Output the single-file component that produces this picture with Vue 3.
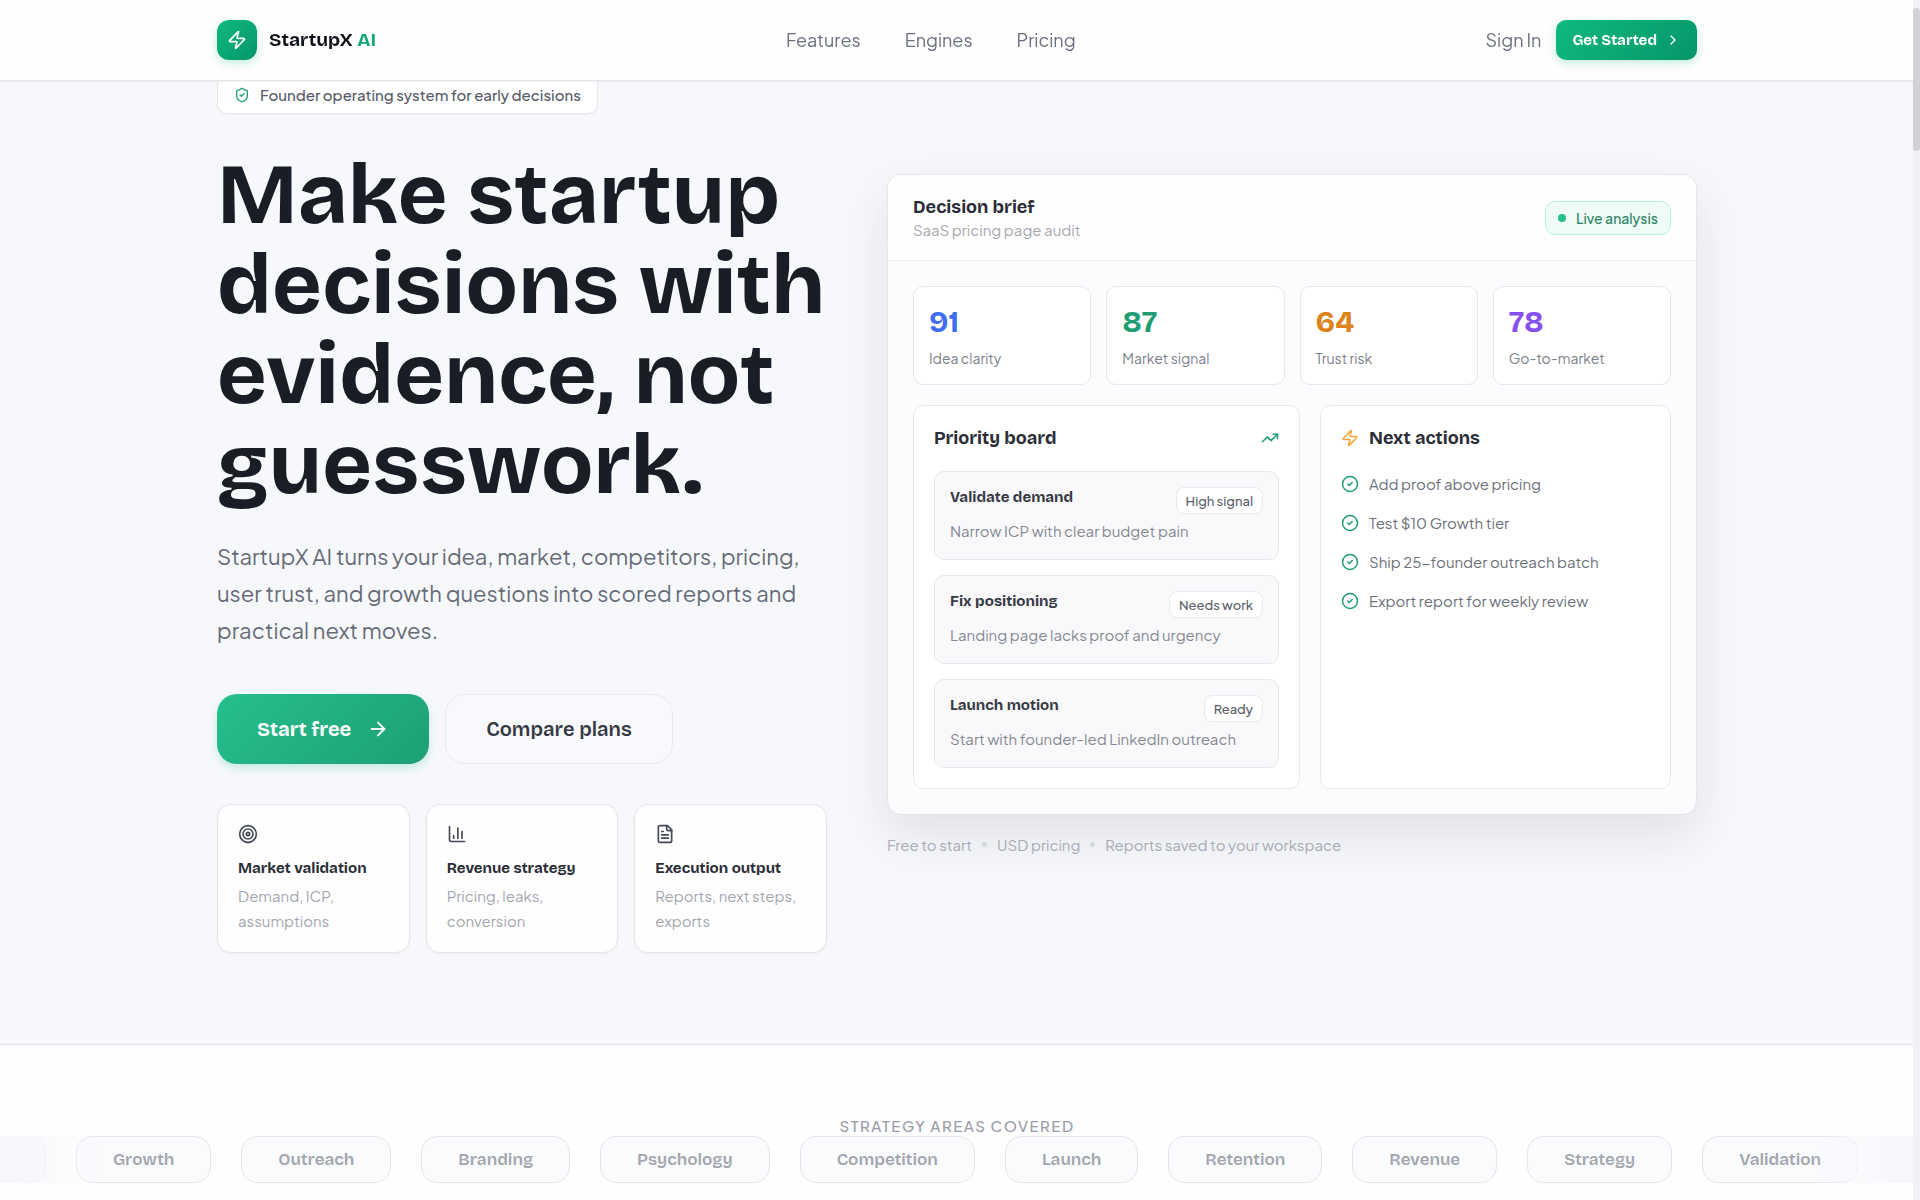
<template>
  <div class="page">
    <header class="topbar">
      <div class="container topbar-inner">
        <a class="brand" href="#">
          <span class="brand-mark">
            <svg class="icon" width="20" height="20" viewBox="0 0 24 24"><path :d="ICONS.zap" /></svg>
          </span>
          <span>StartupX <em>AI</em></span>
        </a>
        <nav class="nav">
          <a v-for="item in navItems" :key="item" href="#">{{ item }}</a>
        </nav>
        <div class="account">
          <a href="#">Sign In</a>
          <button class="btn-small" type="button">
            Get Started
            <svg class="icon" width="16" height="16" viewBox="0 0 24 24"><path d="m9 18 6-6-6-6" /></svg>
          </button>
        </div>
      </div>
    </header>

    <main>
      <section class="hero">
        <div class="container hero-grid">
          <div class="intro">
            <div class="pill">
              <svg class="icon green" width="16" height="16" viewBox="0 0 24 24"><path :d="ICONS.shield" /><path d="m9 12 2 2 4-4" /></svg>
              Founder operating system for early decisions
            </div>
            <h1>Make startup decisions with evidence, not guesswork.</h1>
            <p class="lead">
              StartupX AI turns your idea, market, competitors, pricing, user trust, and growth questions into scored reports and practical next moves.
            </p>
            <div class="actions">
              <button class="btn primary" type="button">
                Start free
                <svg class="icon" width="22" height="22" viewBox="0 0 24 24"><path d="M5 12h14" /><path d="m12 5 7 7-7 7" /></svg>
              </button>
              <button class="btn ghost" type="button">Compare plans</button>
            </div>
            <div class="features">
              <article v-for="f in features" :key="f.title" class="feature">
                <svg class="icon" width="20" height="20" viewBox="0 0 24 24"><path v-for="d in f.paths" :key="d" :d="d" /></svg>
                <h3>{{ f.title }}</h3>
                <p>{{ f.text }}</p>
              </article>
            </div>
          </div>

          <div class="preview">
            <div class="brief">
              <div class="brief-head">
                <div>
                  <h2>Decision brief</h2>
                  <p>SaaS pricing page audit</p>
                </div>
                <span class="live"><i></i>Live analysis</span>
              </div>
              <div class="brief-body">
                <div class="stats">
                  <div v-for="s in stats" :key="s.label" class="stat">
                    <strong :class="s.color">{{ s.value }}</strong>
                    <span>{{ s.label }}</span>
                  </div>
                </div>
                <div class="boards">
                  <div class="board">
                    <div class="board-head spread">
                      <h2>Priority board</h2>
                      <svg class="icon green" width="18" height="18" viewBox="0 0 24 24"><path d="m22 7-8.500 8.500-5-5L2 17" /><path d="M16 7h6v6" /></svg>
                    </div>
                    <div class="tasks">
                      <div v-for="t in tasks" :key="t.title" class="task">
                        <div>
                          <h3>{{ t.title }}</h3>
                          <p>{{ t.text }}</p>
                        </div>
                        <span class="tag">{{ t.tag }}</span>
                      </div>
                    </div>
                  </div>
                  <div class="board">
                    <div class="board-head">
                      <svg class="icon amber" width="18" height="18" viewBox="0 0 24 24"><path :d="ICONS.zap" /></svg>
                      <h2>Next actions</h2>
                    </div>
                    <ul class="checks">
                      <li v-for="a in nextActions" :key="a">
                        <svg class="icon green" width="18" height="18" viewBox="0 0 24 24"><circle cx="12" cy="12" r="10" /><path d="m9 12 2 2 4-4" /></svg>
                        {{ a }}
                      </li>
                    </ul>
                  </div>
                </div>
              </div>
            </div>
            <div class="notes">
              <span v-for="n in notes" :key="n">{{ n }}</span>
            </div>
          </div>
        </div>
      </section>

      <section class="areas">
        <p class="areas-label">Strategy areas covered</p>
        <div class="marquee">
          <span v-for="(a, i) in areas" :key="i" class="chip">{{ a }}</span>
        </div>
      </section>
    </main>
    <div class="scrollbar"><div class="thumb"></div></div>
  </div>
</template>

<script setup>
const ICONS = {
  zap: 'M4 14a1 1 0 0 1-.78-1.63l9.900-10.200a.5.5 0 0 1 .86.460l-1.920 6.020A1 1 0 0 0 13 10h7a1 1 0 0 1 .78 1.630l-9.900 10.200a.5.5 0 0 1-.86-.46l1.920-6.020A1 1 0 0 0 11 14z',
  shield: 'M20 13c0 5-3.500 7.500-7.660 8.950a1 1 0 0 1-.67-.01C7.500 20.500 4 18 4 13V6a1 1 0 0 1 1-1c2 0 4.500-1.200 6.240-2.720a1.170 1.170 0 0 1 1.520 0C14.510 3.810 17 5 19 5a1 1 0 0 1 1 1z',
}

const navItems = ['Features', 'Engines', 'Pricing']

const features = [
  {
    title: 'Market validation',
    text: 'Demand, ICP, assumptions',
    paths: [
      'M2 12a10 10 0 1 0 20 0a10 10 0 1 0-20 0',
      'M6 12a6 6 0 1 0 12 0a6 6 0 1 0-12 0',
      'M10 12a2 2 0 1 0 4 0a2 2 0 1 0-4 0',
    ],
  },
  {
    title: 'Revenue strategy',
    text: 'Pricing, leaks, conversion',
    paths: ['M3 3v16a2 2 0 0 0 2 2h16', 'M18 17V9', 'M13 17V5', 'M8 17v-3'],
  },
  {
    title: 'Execution output',
    text: 'Reports, next steps, exports',
    paths: [
      'M15 2H6a2 2 0 0 0-2 2v16a2 2 0 0 0 2 2h12a2 2 0 0 0 2-2V7z',
      'M14 2v4a2 2 0 0 0 2 2h4',
      'M10 9H8',
      'M16 13H8',
      'M16 17H8',
    ],
  },
]

const stats = [
  { value: 91, label: 'Idea clarity', color: 'blue' },
  { value: 87, label: 'Market signal', color: 'green' },
  { value: 64, label: 'Trust risk', color: 'orange' },
  { value: 78, label: 'Go-to-market', color: 'violet' },
]

const tasks = [
  { title: 'Validate demand', text: 'Narrow ICP with clear budget pain', tag: 'High signal' },
  { title: 'Fix positioning', text: 'Landing page lacks proof and urgency', tag: 'Needs work' },
  { title: 'Launch motion', text: 'Start with founder-led LinkedIn outreach', tag: 'Ready' },
]

const nextActions = [
  'Add proof above pricing',
  'Test $10 Growth tier',
  'Ship 25-founder outreach batch',
  'Export report for weekly review',
]

const notes = ['Free to start', 'USD pricing', 'Reports saved to your workspace']

// the first and last ones run off the edges of the strip
const areas = [
  'Pricing', 'Growth', 'Outreach', 'Branding', 'Psychology', 'Competition',
  'Launch', 'Retention', 'Revenue', 'Strategy', 'Validation', 'Pricing',
]
</script>

<style>
body {
  background: #f7f8fc;
  overflow: hidden;
}
</style>

<style scoped>
.page {
  display: flex;
  flex-direction: column;
  min-height: 100vh;
  padding-right: 6px;
  box-sizing: border-box;
  color: #1a1d26;
  font-family: "Plus Jakarta Sans", Inter, "Liberation Sans", sans-serif;
  font-size: 15px;
  line-height: 24px;
}

.page * {
  box-sizing: border-box;
}

h1, h2, h3, p, ul {
  margin: 0;
  padding: 0;
}

h1, h2, h3, .brand, .btn, .btn-small, .stat strong, .chip {
  font-family: "Bricolage Grotesque", Inter, "Liberation Sans", sans-serif;
}

a {
  color: inherit;
  text-decoration: none;
}

button {
  border: 0;
  cursor: pointer;
}

main {
  display: flex;
  flex-direction: column;
  flex: 1;
}

.container {
  width: 100%;
  max-width: 1480px;
  margin: 0 auto;
}

.icon {
  flex: none;
  fill: none;
  stroke: currentColor;
  stroke-width: 2;
  stroke-linecap: round;
  stroke-linejoin: round;
}

.green { color: #1f9e74; }
.blue { color: #3f6fee; }
.orange { color: #de821c; }
.violet { color: #8650f0; }
.amber { color: #f9a534; }

/* top bar */
.topbar {
  position: fixed;
  top: 0;
  left: 0;
  right: 6px;
  z-index: 2;
  background: #fefefe;
  border-bottom: 1px solid #e2e4e9;
  box-shadow: 0 1px 2px rgba(0, 0, 0, 0.05);
}

.topbar-inner {
  display: flex;
  align-items: center;
  justify-content: space-between;
  height: 80px;
}

.brand {
  display: flex;
  align-items: center;
  gap: 12px;
  font-size: 19px;
  font-weight: 700;
  color: #11141d;
}

.brand em {
  font-style: normal;
  color: #12a873;
}

.brand-mark {
  display: flex;
  align-items: center;
  justify-content: center;
  width: 40px;
  height: 40px;
  border-radius: 12px;
  color: #fff;
  background: linear-gradient(135deg, #10b981, #059669);
  box-shadow: 0 3px 8px rgba(16, 185, 129, 0.25);
}

.nav {
  display: flex;
  gap: 44px;
  font-size: 18px;
  color: #6b7080;
}

.account {
  display: flex;
  align-items: center;
  gap: 15px;
  font-size: 18px;
  color: #6b7080;
}

.btn-small {
  display: flex;
  align-items: center;
  gap: 8px;
  height: 40px;
  padding: 0 16px;
  border-radius: 10px;
  color: #fff;
  font-size: 15px;
  font-weight: 700;
  background: linear-gradient(135deg, #10b981, #059669);
  box-shadow: 0 3px 8px rgba(16, 185, 129, 0.25);
}

/* hero */
.hero {
  padding: 75px 0 91px;
  border-bottom: 1px solid #e1e3e8;
}

.hero-grid {
  display: grid;
  grid-template-columns: 61fr 81fr;
  gap: 60px;
  align-items: center;
}

.pill {
  display: flex;
  align-items: center;
  gap: 10px;
  width: fit-content;
  height: 39px;
  padding: 0 16px;
  border: 1px solid #e6e8ed;
  border-radius: 10px;
  background: #fff;
  color: #555a66;
  font-size: 15px;
  font-weight: 500;
  box-shadow: 0 1px 2px rgba(0, 0, 0, 0.04);
}

h1 {
  margin-top: 36px;
  font-size: 86px;
  font-weight: 700;
  line-height: 90px;
}

.lead {
  margin-top: 28px;
  font-size: 22px;
  line-height: 37px;
  color: #666b77;
}

.actions {
  display: flex;
  gap: 16px;
  margin-top: 45px;
}

.btn {
  display: flex;
  align-items: center;
  gap: 16px;
  height: 70px;
  padding: 0 40px;
  border-radius: 20px;
  font-size: 20px;
  font-weight: 700;
}

.primary {
  color: #fff;
  background: linear-gradient(135deg, #26bf8d, #1d9f75);
  box-shadow: 0 4px 8px rgba(16, 185, 129, 0.22);
}

.ghost {
  border: 1px solid #e8eaef;
  background: #f8f9fc;
  color: #343842;
  font-weight: 600;
}

.features {
  display: grid;
  grid-template-columns: repeat(3, 1fr);
  gap: 16px;
  margin-top: 40px;
}

.feature {
  height: 149px;
  padding: 19px 20px;
  border: 1px solid #e4e6ec;
  border-radius: 14px;
  background: #fefefe;
  color: #464a56;
  box-shadow: 0 1px 3px rgba(0, 0, 0, 0.04);
}

.feature .icon {
  display: block;
}

.feature h3 {
  margin-top: 12px;
  font-size: 15px;
  line-height: 24px;
  color: #2a2d37;
}

.feature p {
  margin-top: 3px;
  line-height: 25px;
  color: #a3a6b0;
}

/* decision brief */
.brief {
  overflow: hidden;
  border: 1px solid #e4e6eb;
  border-radius: 14px;
  background: #fbfcfe;
  box-shadow: 0 20px 50px rgba(20, 25, 40, 0.1);
}

.brief-head {
  display: flex;
  align-items: center;
  justify-content: space-between;
  height: 86px;
  padding: 0 25px;
  border-bottom: 1px solid #eaecf0;
  background: #fefefe;
}

h2 {
  font-size: 18px;
  font-weight: 700;
  line-height: 24px;
  color: #2a2d37;
}

.brief-head p {
  line-height: 22px;
  color: #a6a9b1;
}

.live {
  display: flex;
  align-items: center;
  gap: 10px;
  height: 34px;
  padding: 0 12px;
  border: 1px solid #bdf1dc;
  border-radius: 10px;
  background: #effcf6;
  color: #2c8263;
  font-size: 14px;
  font-weight: 500;
}

.live i {
  width: 8px;
  height: 8px;
  border-radius: 50%;
  background: #22c08c;
}

.brief-body {
  padding: 25px;
}

.stats {
  display: grid;
  grid-template-columns: repeat(4, 1fr);
  gap: 15px;
}

.stat {
  height: 99px;
  padding: 15px;
  border: 1px solid #e6e8ec;
  border-radius: 10px;
  background: #fff;
}

.stat strong {
  display: block;
  font-size: 30px;
  line-height: 40px;
}

.stat span {
  display: block;
  margin-top: 4px;
  font-size: 14px;
  color: #7c808a;
}

.boards {
  display: grid;
  grid-template-columns: 387fr 351fr;
  gap: 20px;
  margin-top: 20px;
}

.board {
  padding: 20px;
  border: 1px solid #e8eaee;
  border-radius: 10px;
  background: #fff;
}

.board-head {
  display: flex;
  align-items: center;
  gap: 10px;
}

.spread {
  justify-content: space-between;
}

.tasks {
  display: grid;
  gap: 15px;
  margin-top: 21px;
}

.task {
  display: flex;
  justify-content: space-between;
  align-items: flex-start;
  height: 89px;
  padding: 15px;
  border: 1px solid #e6e8ec;
  border-radius: 10px;
  background: #f9f9fb;
}

.task > div {
  width: 0;
  flex: 1;
  white-space: nowrap;
}

.task h3 {
  font-size: 15px;
  line-height: 20px;
  color: #363944;
}

.task p {
  margin-top: 12px;
  color: #858993;
}

.tag {
  height: 27px;
  padding: 0 9px;
  border: 1px solid #e8eaee;
  border-radius: 8px;
  background: #fff;
  color: #5b5f69;
  font-size: 13px;
  font-weight: 500;
  line-height: 26px;
}

.checks {
  display: grid;
  gap: 15px;
  margin-top: 22px;
  list-style: none;
}

.checks li {
  display: flex;
  align-items: center;
  gap: 10px;
  color: #6c707a;
}

.notes {
  display: flex;
  gap: 25px;
  margin-top: 21px;
  line-height: 18px;
  color: #a8abb4;
}

.notes span {
  position: relative;
}

.notes span + span::before {
  content: "";
  position: absolute;
  left: -15px;
  top: 6px;
  width: 5px;
  height: 5px;
  border-radius: 50%;
  background: #d5d7de;
}

/* strategy areas */
.areas {
  flex: 1;
  padding-top: 70px;
  background: #fefefe;
}

.areas-label {
  text-align: center;
  text-transform: uppercase;
  font-size: 15px;
  font-weight: 500;
  line-height: 21px;
  letter-spacing: 1.5px;
  color: #989ca9;
}

.marquee {
  position: relative;
  display: flex;
  justify-content: center;
  gap: 30px;
  padding-left: 20px;
  overflow: hidden;
}

.marquee::before,
.marquee::after {
  content: "";
  position: absolute;
  top: 0;
  bottom: 0;
  width: 100px;
}

.marquee::before {
  left: 0;
  background: linear-gradient(90deg, #f7f8fc 20%, rgba(247, 248, 252, 0));
}

.marquee::after {
  right: 0;
  background: linear-gradient(-90deg, #f7f8fc 20%, rgba(247, 248, 252, 0));
}

.chip {
  flex: none;
  height: 47px;
  padding: 0 36px;
  border: 1px solid #e4e6ea;
  border-radius: 16px;
  background: #fafbfd;
  color: #a3a6ae;
  font-size: 17px;
  font-weight: 600;
  line-height: 45px;
}

/* page scrollbar */
.scrollbar {
  position: fixed;
  top: 0;
  right: 0;
  bottom: 0;
  z-index: 3;
  width: 7px;
  padding-top: 8px;
  background: #f1f2f7;
}

.thumb {
  height: 143px;
  border-radius: 4px;
  background: #d1d2d8;
}
</style>
